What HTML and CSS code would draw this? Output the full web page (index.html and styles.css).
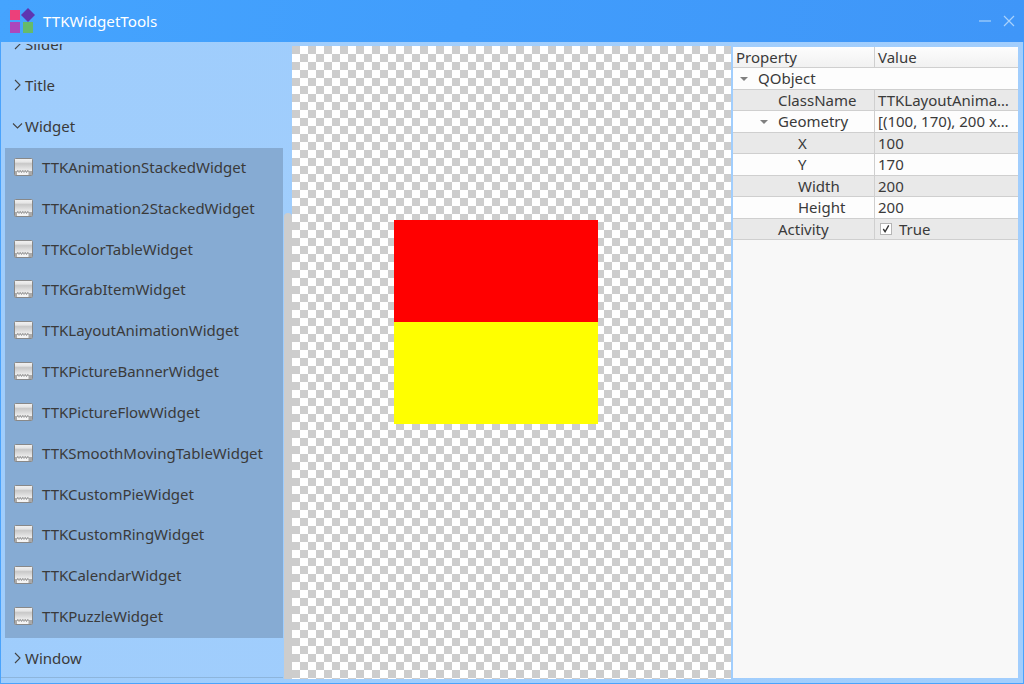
FILE: index.html
```html
<!DOCTYPE html>
<html lang="en">
<head>
  <meta charset="UTF-8">
  <title>TTKWidgetTools</title>
  <link rel="stylesheet" href="styles.css">
</head>
<body>
  <svg class="defs" width="0" height="0">
    <defs>
      <linearGradient id="iconFill" x1="0" y1="0" x2="0" y2="1">
        <stop offset="0" stop-color="#f2f2f2"/>
        <stop offset="0.2" stop-color="#e6e6e6"/>
        <stop offset="0.3" stop-color="#c8c8c8"/>
        <stop offset="0.7" stop-color="#ececec"/>
        <stop offset="1" stop-color="#dcdcdc"/>
      </linearGradient>
      <symbol id="widgetIcon" viewBox="0 0 19 18">
        <rect x="0.5" y="0.5" width="18" height="17" rx="1" fill="url(#iconFill)" stroke="#888"/>
        <path d="M1 17v-4h2v-1h1.5v1h1v-1H7v1h1v-1h1.5v1h1v-1H12v1h1v-1h1.5v1H18v4z" fill="#aaa"/>
        <path d="M3 17v-3h1.5v1h1v-1H7v1h1v-1h1.5v1h1v-1H12v1h1v-1h1.5v3z" fill="#f4f4f4"/>
      </symbol>
    </defs>
  </svg>
  <div class="window">
    <header class="titlebar">
      <svg class="logo" width="28" height="28" viewBox="0 0 28 28">
        <rect x="1" y="2" width="10" height="10" fill="#ec407a"/>
        <path d="M19 0l7 7-7 7-7-7z" fill="#5e35b1"/>
        <rect x="1" y="14" width="10" height="11" fill="#ab47bc"/>
        <rect x="14" y="14" width="10" height="11" fill="#66bb6a"/>
      </svg>
      <span class="app-name">TTKWidgetTools</span>
      <div class="window-btns">
        <svg width="14" height="14" viewBox="0 0 14 14"><path d="M1 7h12" stroke="#a9d2fb" stroke-width="1.2"/></svg>
        <svg width="14" height="14" viewBox="0 0 14 14"><path d="M2 2l10 10M12 2L2 12" stroke="#a9d2fb" stroke-width="1.2"/></svg>
      </div>
    </header>
    <div class="content">
      <aside class="sidebar">
        <div class="tree">
          <div class="group-title"><svg class="arrow" width="8" height="12" viewBox="0 0 8 12"><path d="M1 1l5 5-5 5" /></svg>Slider</div>
          <div class="group-title"><svg class="arrow" width="8" height="12" viewBox="0 0 8 12"><path d="M1 1l5 5-5 5" /></svg>Title</div>
          <div class="group-title"><svg class="arrow open" width="11" height="8" viewBox="0 0 11 8"><path d="M1 1.5l4.5 4.5 4.5-4.5" /></svg>Widget</div>
          <ul class="items">
            <li><svg class="item-icon"><use href="#widgetIcon"/></svg>TTKAnimationStackedWidget</li>
            <li><svg class="item-icon"><use href="#widgetIcon"/></svg>TTKAnimation2StackedWidget</li>
            <li><svg class="item-icon"><use href="#widgetIcon"/></svg>TTKColorTableWidget</li>
            <li><svg class="item-icon"><use href="#widgetIcon"/></svg>TTKGrabItemWidget</li>
            <li><svg class="item-icon"><use href="#widgetIcon"/></svg>TTKLayoutAnimationWidget</li>
            <li><svg class="item-icon"><use href="#widgetIcon"/></svg>TTKPictureBannerWidget</li>
            <li><svg class="item-icon"><use href="#widgetIcon"/></svg>TTKPictureFlowWidget</li>
            <li><svg class="item-icon"><use href="#widgetIcon"/></svg>TTKSmoothMovingTableWidget</li>
            <li><svg class="item-icon"><use href="#widgetIcon"/></svg>TTKCustomPieWidget</li>
            <li><svg class="item-icon"><use href="#widgetIcon"/></svg>TTKCustomRingWidget</li>
            <li><svg class="item-icon"><use href="#widgetIcon"/></svg>TTKCalendarWidget</li>
            <li><svg class="item-icon"><use href="#widgetIcon"/></svg>TTKPuzzleWidget</li>
          </ul>
          <div class="group-title last"><svg class="arrow" width="8" height="12" viewBox="0 0 8 12"><path d="M1 1l5 5-5 5" /></svg>Window</div>
        </div>
      </aside>
      <div class="scrollbar"><div class="scroll-thumb"></div></div>
      <main class="canvas">
        <div class="demo">
          <div class="demo-red"></div>
          <div class="demo-yellow"></div>
        </div>
      </main>
      <section class="props">
        <div class="row head"><div class="cell">Property</div><div class="cell">Value</div></div>
        <div class="row top"><div class="cell lvl0"><i class="tri"></i>QObject</div><div class="cell"></div></div>
        <div class="row alt"><div class="cell lvl1">ClassName</div><div class="cell">TTKLayoutAnima…</div></div>
        <div class="row"><div class="cell lvl1"><i class="tri"></i>Geometry</div><div class="cell">[(100, 170), 200 x…</div></div>
        <div class="row alt"><div class="cell lvl2">X</div><div class="cell">100</div></div>
        <div class="row"><div class="cell lvl2">Y</div><div class="cell">170</div></div>
        <div class="row alt"><div class="cell lvl2">Width</div><div class="cell">200</div></div>
        <div class="row"><div class="cell lvl2">Height</div><div class="cell">200</div></div>
        <div class="row alt"><div class="cell lvl1">Activity</div><div class="cell"><span class="check"><svg width="10" height="10" viewBox="0 0 11 11"><path d="M2.5 5.5l2 3 4-7" fill="none" stroke="#333" stroke-width="1.5"/></svg></span>True</div></div>
      </section>
    </div>
  </div>
</body>
</html>
```

FILE: styles.css
```css
* {
  box-sizing: border-box;
}
html, body {
  margin: 0;
  padding: 0;
  height: 100%;
}
body {
  font-family: "Noto Sans", sans-serif;
  font-size: 15px;
  color: #3a3a3a;
  overflow: hidden;
}
.defs {
  position: absolute;
}
.window {
  height: 684px;
  display: flex;
  flex-direction: column;
  background: linear-gradient(100deg, #9fcdfc 0%, #a2cefd 100%);
  border-left: 1px solid #4aa3fc;
  border-right: 1px solid #4aa3fc;
  border-bottom: 1px solid #4aa3fc;
}
.titlebar {
  height: 42px;
  flex: none;
  margin: 0 -1px;
  display: flex;
  align-items: center;
  padding: 0 8px 0 9px;
  background: linear-gradient(100deg, #45a4fe 0%, #419dfc 45%, #3f96f8 100%);
}
.logo {
  margin-top: 1px;
}
.app-name {
  margin-left: 6px;
  font-size: 15.2px;
  color: #fff;
}
.window-btns {
  margin-left: auto;
  display: flex;
  gap: 10px;
}
.content {
  flex: 1;
  display: flex;
  min-height: 0;
  padding-right: 5px;
}
.sidebar {
  width: 283px;
  flex: none;
  margin-top: 2px;
  overflow: hidden;
}
.tree {
  margin-top: -19px;
  padding: 0 1px 0 4px;
}
.group-title {
  height: 41px;
  display: flex;
  align-items: center;
  padding: 0 0 3px 9px;
}
.group-title.last {
  height: 40px;
  margin-left: -4px;
  padding: 1px 0 0 13px;
  border-bottom: 1px solid #8db5dc;
}
.arrow {
  flex: none;
  margin-right: 3px;
  fill: none;
  stroke: #444;
  stroke-width: 1.1;
}
.arrow.open {
  margin-left: -2px;
  margin-right: 2px;
}
.items {
  list-style: none;
  margin: 0;
  padding: 0;
  height: 490px;
  background: #86abd3;
  display: flex;
  flex-direction: column;
}
.items li {
  flex: 1;
  display: flex;
  align-items: center;
  padding: 0 0 3px 9px;
}
.item-icon {
  width: 19px;
  height: 18px;
  margin: 0 9px 0 0;
  flex: none;
}
.scrollbar {
  width: 8px;
  flex: none;
  margin-bottom: 4px;
  display: flex;
  flex-direction: column;
  justify-content: flex-end;
}
.scroll-thumb {
  height: 466px;
  background: #cdcdcd;
  border-radius: 4px 4px 0 0;
}
.canvas {
  width: 439px;
  flex: none;
  margin: 4px 0;
  background-color: #fff;
  background-image: conic-gradient(#fff 25%, #cdcdcd 0 50%, #fff 0 75%, #cdcdcd 0);
  background-size: 16px 16px;
}
.demo {
  width: 204px;
  height: 204px;
  margin: 174px 0 0 102px;
}
.demo-red {
  height: 102px;
  background: #ff0000;
}
.demo-yellow {
  height: 102px;
  background: #ffff00;
}
.props {
  flex: 1;
  margin: 4.5px 0 5px 2px;
  background: #f8f8f8;
}
.row {
  height: 21.5px;
  display: grid;
  grid-template-columns: 142px 1fr;
  border-bottom: 1px solid #cfcfcf;
  background: #fdfdfd;
}
.row.alt {
  background: #e9e9e9;
}
.row.head {
  background: linear-gradient(#fdfdfd, #f1f1f1);
}
.cell {
  display: flex;
  align-items: center;
  padding: 1px 0 0 4px;
  white-space: nowrap;
  overflow: hidden;
  border-right: 1px solid #cfcfcf;
  line-height: 1;
}
.row.top .cell {
  border-right: 0;
}
.cell:last-child {
  border-right: 0;
  padding-left: 3px;
}
.row.head .cell {
  padding-left: 3px;
}
.lvl0 {
  padding-left: 7px;
}
.lvl1 {
  padding-left: 45px;
}
.lvl2 {
  padding-left: 65px;
}
.tri {
  width: 0;
  height: 0;
  margin-right: 10px;
  border-left: 4px solid transparent;
  border-right: 4px solid transparent;
  border-top: 4px solid #808080;
}
.lvl1 .tri {
  margin-left: -18px;
}
.check {
  width: 12px;
  height: 12px;
  margin: 0 7px 0 2px;
  background: #fff;
  border: 1px solid #b5b5b5;
  display: flex;
  align-items: center;
  justify-content: center;
}
```
